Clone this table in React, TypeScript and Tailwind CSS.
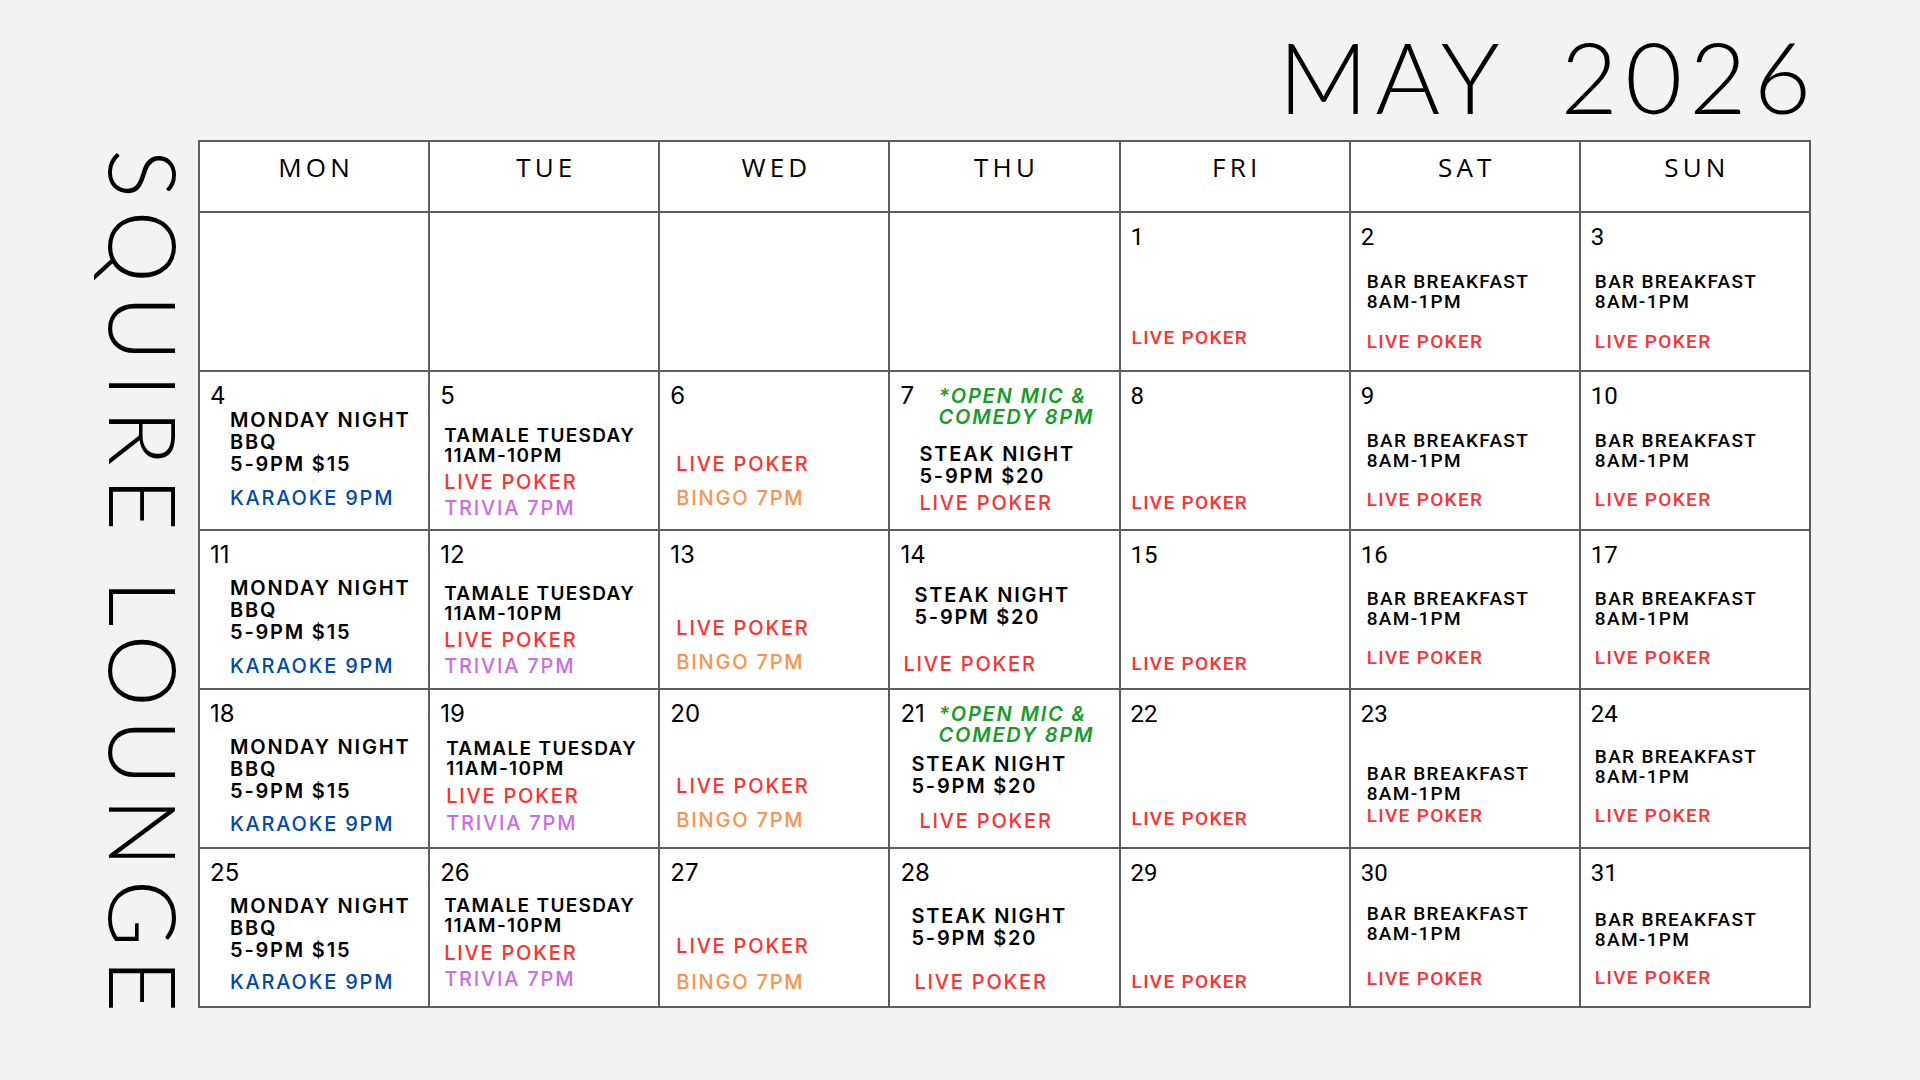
import React from "react";

type Ev = {
  t: string[];
  c: string;
  k: "w" | "c" | "i" | "s";
  lh: string;
  mt: string;
  ml: string;
};

type Cell = {
  n?: number;
  cond?: boolean;
  top?: Ev;
  ev?: Ev[];
};

const BLK = "text-black";
const RED = "text-[#ff3131]";
const BLUE = "text-[#004aad]";
const PURPLE = "text-[#cb6ce6]";
const ORANGE = "text-[#ff914d]";
const GREEN = "text-[#1a9c27]";

const days = ["MON", "TUE", "WED", "THU", "FRI", "SAT", "SUN"];

const mon = (mt1: string, mt2: string): Ev[] => [
  { t: ["MONDAY NIGHT", "BBQ", "5-9PM $15"], c: BLK, k: "w", lh: "leading-[22px]", mt: mt1, ml: "ml-[30px]" },
  { t: ["KARAOKE 9PM"], c: BLUE, k: "w", lh: "leading-[22px]", mt: mt2, ml: "ml-[30px]" },
];

const tue = (mt1: string, mt2: string, mt3: string, ml: string): Ev[] => [
  { t: ["TAMALE TUESDAY", "11AM-10PM"], c: BLK, k: "s", lh: "leading-[20px]", mt: mt1, ml },
  { t: ["LIVE POKER"], c: RED, k: "w", lh: "leading-[22px]", mt: mt2, ml },
  { t: ["TRIVIA 7PM"], c: PURPLE, k: "w", lh: "leading-[22px]", mt: mt3, ml },
];

const wed = (mt1: string, mt2: string): Ev[] => [
  { t: ["LIVE POKER"], c: RED, k: "w", lh: "leading-[22px]", mt: mt1, ml: "ml-[16px]" },
  { t: ["BINGO 7PM"], c: ORANGE, k: "w", lh: "leading-[22px]", mt: mt2, ml: "ml-[16px]" },
];

const thu = (mt1: string, ml1: string, mt2: string, ml2: string): Ev[] => [
  { t: ["STEAK NIGHT", "5-9PM $20"], c: BLK, k: "w", lh: "leading-[22px]", mt: mt1, ml: ml1 },
  { t: ["LIVE POKER"], c: RED, k: "w", lh: "leading-[22px]", mt: mt2, ml: ml2 },
];

const openMic: Ev = {
  t: ["*OPEN MIC &", "COMEDY 8PM"],
  c: GREEN,
  k: "i",
  lh: "leading-[21px]",
  mt: "mt-[2px]",
  ml: "ml-0",
};

const fri = (mt: string): Ev[] => [
  { t: ["LIVE POKER"], c: RED, k: "c", lh: "leading-[20px]", mt, ml: "ml-[11px]" },
];

const bar = (mt1: string, mt2: string, ml: string): Ev[] => [
  { t: ["BAR BREAKFAST", "8AM-1PM"], c: BLK, k: "c", lh: "leading-[20px]", mt: mt1, ml },
  { t: ["LIVE POKER"], c: RED, k: "c", lh: "leading-[20px]", mt: mt2, ml },
];

const cells: Cell[] = [
  {}, {}, {}, {},
  { n: 1, cond: true, ev: fri("mt-[79px]") },
  { n: 2, cond: true, ev: bar("mt-[23px]", "mt-[20px]", "ml-[16px]") },
  { n: 3, cond: true, ev: bar("mt-[23px]", "mt-[20px]", "ml-[14px]") },

  { n: 4, ev: mon("mt-[1px]", "mt-[12px]") },
  { n: 5, ev: tue("mt-[18px]", "mt-[5px]", "mt-[4px]", "ml-[14px]") },
  { n: 6, ev: wed("mt-[45px]", "mt-[12px]") },
  { n: 7, top: openMic, ev: thu("mt-[15px]", "ml-[29px]", "mt-[5px]", "ml-[29px]") },
  { n: 8, cond: true, ev: fri("mt-[85px]") },
  { n: 9, cond: true, ev: bar("mt-[23px]", "mt-[19px]", "ml-[16px]") },
  { n: 10, cond: true, ev: bar("mt-[23px]", "mt-[19px]", "ml-[14px]") },

  { n: 11, ev: mon("mt-[10px]", "mt-[12px]") },
  { n: 12, ev: tue("mt-[17px]", "mt-[5px]", "mt-[4px]", "ml-[14px]") },
  { n: 13, ev: wed("mt-[50px]", "mt-[12px]") },
  { n: 14, ev: thu("mt-[17px]", "ml-[24px]", "mt-[25px]", "ml-[13px]") },
  { n: 15, cond: true, ev: fri("mt-[87px]") },
  { n: 16, cond: true, ev: bar("mt-[22px]", "mt-[19px]", "ml-[16px]") },
  { n: 17, cond: true, ev: bar("mt-[22px]", "mt-[19px]", "ml-[14px]") },

  { n: 18, ev: mon("mt-[10px]", "mt-[11px]") },
  { n: 19, ev: tue("mt-[13px]", "mt-[6px]", "mt-[5px]", "ml-[16px]") },
  { n: 20, ev: wed("mt-[49px]", "mt-[12px]") },
  { n: 21, top: openMic, ev: thu("mt-[7px]", "ml-[21px]", "mt-[13px]", "ml-[29px]") },
  { n: 22, cond: true, ev: fri("mt-[83px]") },
  { n: 23, cond: true, ev: bar("mt-[38px]", "mt-[2px]", "ml-[16px]") },
  { n: 24, cond: true, ev: bar("mt-[21px]", "mt-[19px]", "ml-[14px]") },

  { n: 25, ev: mon("mt-[10px]", "mt-[10px]") },
  { n: 26, ev: tue("mt-[11px]", "mt-[6px]", "mt-[4px]", "ml-[14px]") },
  { n: 27, ev: wed("mt-[50px]", "mt-[14px]") },
  { n: 28, ev: thu("mt-[20px]", "ml-[21px]", "mt-[22px]", "ml-[24px]") },
  { n: 29, cond: true, ev: fri("mt-[87px]") },
  { n: 30, cond: true, ev: bar("mt-[19px]", "mt-[25px]", "ml-[16px]") },
  { n: 31, cond: true, ev: bar("mt-[25px]", "mt-[18px]", "ml-[14px]") },
];

function fontFor(e: Ev) {
  if (e.k === "c") return "[font-family:Roboto,sans-serif] font-medium text-[19px] tracking-[0.07em]";
  if (e.k === "i") return "[font-family:Inter,sans-serif] italic font-semibold text-[20px] tracking-[0.09em]";
  if (e.k === "s") return "[font-family:Inter,sans-serif] font-semibold text-[19px] tracking-[0.07em]";
  const weight = e.c === BLK ? "font-semibold" : "font-medium";
  return `[font-family:Inter,sans-serif] ${weight} text-[20px] tracking-[0.09em]`;
}

function Group({ e }: { e: Ev }) {
  return (
    <div className={`${e.mt} ${e.ml} ${e.c} ${e.lh} ${fontFor(e)}`}>
      {e.t.map((line) => (
        <div key={line} className="whitespace-nowrap">
          {line}
        </div>
      ))}
    </div>
  );
}

function DayNum({ n, cond }: { n: number; cond?: boolean }) {
  return cond ? (
    <div className="leading-[24px] text-[24px] [font-family:Roboto,sans-serif] font-normal text-black">{n}</div>
  ) : (
    <div className="leading-[24px] text-[24px] [font-family:Inter,sans-serif] font-normal text-black">{n}</div>
  );
}

function DayCell({ cell }: { cell: Cell }) {
  return (
    <div className="h-[159px] border-r-2 border-b-2 border-[#5e5e5e] bg-white flex flex-col">
      {cell.n !== undefined &&
        (cell.top ? (
          <div className="mt-[12px] flex items-start">
            <div className="w-[48px] pl-[10px]">
              <DayNum n={cell.n} />
            </div>
            <Group e={cell.top} />
          </div>
        ) : (
          <div className="mt-[12px] pl-[10px]">
            <DayNum n={cell.n} cond={cell.cond} />
          </div>
        ))}
      {cell.ev?.map((e, i) => (
        <Group key={i} e={e} />
      ))}
    </div>
  );
}

export default function App() {
  return (
    <div className="w-[1920px] h-[1080px] bg-[#f3f3f3] flex overflow-hidden">
      <div className="w-[198px] shrink-0 pl-[98px] pt-[149px]">
        <div className="[writing-mode:vertical-rl] [font-family:Lato,sans-serif] font-light text-[92px] leading-none tracking-[0.13em] text-black whitespace-nowrap">
          SQUIRE LOUNGE
        </div>
      </div>

      <div className="w-[1613px] flex flex-col">
        <div className="h-[140px] flex justify-end items-start pt-[26px]">
          <h1 className="[font-family:Lato,sans-serif] font-light text-[99px] leading-none tracking-[0.07em] [word-spacing:24px] text-black mr-[-7px] whitespace-nowrap">
            MAY 2026
          </h1>
        </div>

        <div className="grid grid-cols-7 border-l-2 border-t-2 border-[#5e5e5e]">
          {days.map((d) => (
            <div
              key={d}
              className="h-[71px] border-r-2 border-b-2 border-[#5e5e5e] bg-white flex justify-center pt-[11px]"
            >
              <span className="[font-family:'Open_Sans',sans-serif] text-[26px] leading-[28px] tracking-[0.16em] pl-[0.16em] text-black">
                {d}
              </span>
            </div>
          ))}
          {cells.map((c, i) => (
            <DayCell key={i} cell={c} />
          ))}
        </div>
      </div>
    </div>
  );
}
